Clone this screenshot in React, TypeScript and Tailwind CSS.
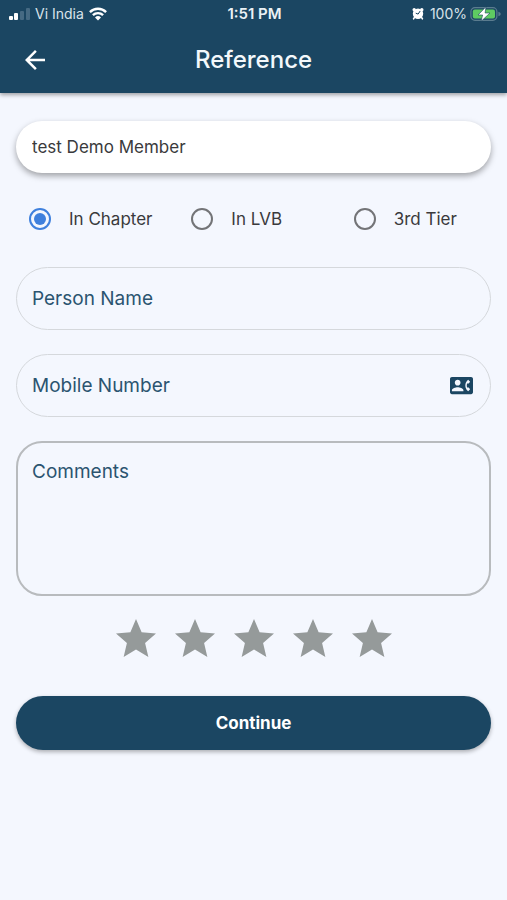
import { useState } from "react";

const TIERS = ["In Chapter", "In LVB", "3rd Tier"];
const STARS = [1, 2, 3, 4, 5];

function StatusBar() {
  return (
    <div className="grid h-[27px] grid-cols-3 items-center pr-[6px] pl-2 text-[14px] leading-5 text-[#d9e3ea]">
      <div className="flex items-center gap-[5px] whitespace-nowrap">
        <svg width="22" height="12" viewBox="0 0 22 12" aria-hidden="true">
          <rect x="1" y="8" width="4" height="4" rx="1" fill="#fff" />
          <rect x="6" y="5" width="4" height="7" rx="1" fill="#fff" />
          <rect x="12" y="3" width="4" height="9" rx="1" fill="#466a83" />
          <rect x="18" y="0" width="4" height="12" rx="1" fill="#466a83" />
        </svg>
        <span>Vi India</span>
        <svg width="18" height="14" viewBox="0 0 18 14" fill="none" stroke="#fff" strokeWidth="2.4" aria-hidden="true">
          <path d="M.9 5.1a11.6 11.6 0 0 1 16.2 0" />
          <path d="M3.9 8.2a7.3 7.3 0 0 1 10.2 0" />
          <path d="M9 13.6 6 10.5a4.3 4.3 0 0 1 6 0z" fill="#fff" stroke="none" />
        </svg>
      </div>
      <div className="text-center text-[15px] font-semibold whitespace-nowrap text-[#eaf1f5]">1:51 PM</div>
      <div className="flex items-center justify-end gap-[3px] whitespace-nowrap">
        <svg width="12" height="13" viewBox="0 0 12 13" className="mr-[3px]" aria-hidden="true">
          <circle cx="6" cy="6.700" r="5.200" fill="#fff" />
          <circle cx="2.200" cy="2.700" r="1.700" fill="#fff" />
          <circle cx="9.800" cy="2.700" r="1.700" fill="#fff" />
          <path d="m2.500 10.400-.9 1.400M9.500 10.400l.9 1.400" stroke="#fff" strokeWidth="1.600" strokeLinecap="round" />
          <path d="M8 4.300 6.100 7.100 4.100 6.300" fill="none" stroke="#1b4662" strokeWidth="1" strokeLinecap="round" />
        </svg>
        <span>100%</span>
        <svg width="31" height="16" viewBox="0 0 31 16" aria-hidden="true">
          <rect x="0.9" y="1.7" width="26" height="12.6" rx="4" fill="none" stroke="#5b7c8f" strokeWidth="1.2" />
          <path d="M28.4 5.8c1.7.5 2.3 1.2 2.3 2.2s-.6 1.7-2.3 2.2z" fill="#5b7c8f" />
          <rect x="2.8" y="3.6" width="22.2" height="8.8" rx="2" fill="#5fcb62" />
          <path d="M16 .8 8 9h4.600l-1.500 6.300L20 7h-4.900z" fill="#fff" stroke="#1b4662" strokeWidth=".6" />
        </svg>
      </div>
    </div>
  );
}

export default function App() {
  const [tier, setTier] = useState(TIERS[0]);
  const [rating, setRating] = useState(0);

  return (
    <div className="min-h-screen bg-[#f4f7fe] font-['Inter','Liberation_Sans',sans-serif]">
      <header className="bg-[#1b4662] shadow-[0_2px_4px_rgba(0,0,0,0.35)]">
        <StatusBar />
        <div className="grid h-[66px] grid-cols-[40px_1fr_40px] items-center px-[15px]">
          <button type="button" aria-label="Back" className="flex size-10 items-center justify-center">
            <svg width="30" height="30" viewBox="0 0 24 24" fill="#fff" aria-hidden="true">
              <path d="M20 11H7.83l5.59-5.59L12 4l-8 8 8 8 1.41-1.41L7.83 13H20v-2z" />
            </svg>
          </button>
          <h1 className="text-center text-[24px] leading-8 font-medium text-[#f3f8fb]">Reference</h1>
        </div>
      </header>

      <form onSubmit={(e) => e.preventDefault()} className="px-4 pt-7">
        <input
          type="text"
          aria-label="Member"
          defaultValue="test Demo Member"
          className="block h-[52px] w-full rounded-full bg-white px-4 text-[17px] leading-6 text-[#3a3a3c] shadow-[0_3px_6px_rgba(0,0,0,0.35)] outline-none"
        />

        <fieldset aria-label="Reference type" className="-mr-3 mt-[34px] grid grid-cols-3">
          {TIERS.map((name) => (
            <label key={name} className="flex items-center gap-[18px] pl-[13px] text-[17px] leading-6 whitespace-nowrap text-[#3a3a3c]">
              <input
                type="radio"
                name="tier"
                value={name}
                checked={tier === name}
                onChange={() => setTier(name)}
                className="grid size-[22px] shrink-0 appearance-none place-items-center rounded-full border-2 border-[#737477] checked:border-[#3f80dd] checked:before:size-3 checked:before:rounded-full checked:before:bg-[#3f80dd] checked:before:content-['']"
              />
              {name}
            </label>
          ))}
        </fieldset>

        <input
          type="text"
          aria-label="Person Name"
          placeholder="Person Name"
          className="mt-9 block h-[63px] w-full rounded-full border border-[#d5d8dc] bg-transparent px-[15px] text-[19px] leading-6 text-[#2b5470] outline-none placeholder:text-[#2b5470]"
        />

        <div className="mt-6 flex h-[63px] items-center rounded-full border border-[#d5d8dc] pr-[17px] pl-[15px]">
          <input
            type="tel"
            aria-label="Mobile Number"
            placeholder="Mobile Number"
            className="min-w-0 flex-1 bg-transparent text-[19px] leading-6 text-[#2b5470] outline-none placeholder:text-[#2b5470]"
          />
          <button type="button" aria-label="Choose from contacts">
            <svg width="23" height="23" viewBox="0 0 24 24" fill="#1b4662" aria-hidden="true">
              <path d="M22 3H2C.9 3 0 3.900 0 5v14c0 1.100.9 2 2 2h20c1.100 0 1.990-.9 1.990-2L24 5c0-1.100-.9-2-2-2zM8 6c1.660 0 3 1.340 3 3s-1.340 3-3 3-3-1.340-3-3 1.340-3 3-3zm6 12H2v-1c0-2 4-3.100 6-3.100s6 1.100 6 3.100v1zm3.850-4h1.640L21 16l-1.990 1.990c-1.310-.98-2.280-2.380-2.730-3.990-.18-.64-.28-1.310-.28-2s.1-1.360.28-2c.45-1.620 1.420-3.010 2.730-3.990L21 8l-1.510 2h-1.640c-.22.63-.35 1.300-.35 2s.13 1.370.35 2z" />
            </svg>
          </button>
        </div>

        <textarea
          aria-label="Comments"
          placeholder="Comments"
          className="mt-6 block h-[155px] w-full resize-none rounded-[26px] border-2 border-[#b8bbbe] bg-transparent px-[14px] pt-[17px] text-[19px] leading-6 text-[#2b5470] outline-none placeholder:text-[#2b5470]"
        />

        <div className="mt-[19px] flex justify-center gap-[11px]">
          {STARS.map((n) => (
            <button
              key={n}
              type="button"
              aria-label={`Rate ${n}`}
              onClick={() => setRating(n)}
              className={n <= rating ? "text-[#f5b301]" : "text-[#959a9a]"}
            >
              <svg width="48" height="48" viewBox="0 0 24 24" fill="currentColor" aria-hidden="true">
                <path d="M12 17.270 18.180 21l-1.640-7.030L22 9.240l-7.190-.61L12 2 9.190 8.630 2 9.240l5.460 4.730L5.820 21z" />
              </svg>
            </button>
          ))}
        </div>

        <button
          type="submit"
          className="mt-[33px] block h-[54px] w-full rounded-full bg-[#1b4662] text-[17px] leading-6 font-bold text-white shadow-[0_2px_4px_rgba(0,0,0,0.3)]"
        >
          Continue
        </button>
      </form>
    </div>
  );
}
